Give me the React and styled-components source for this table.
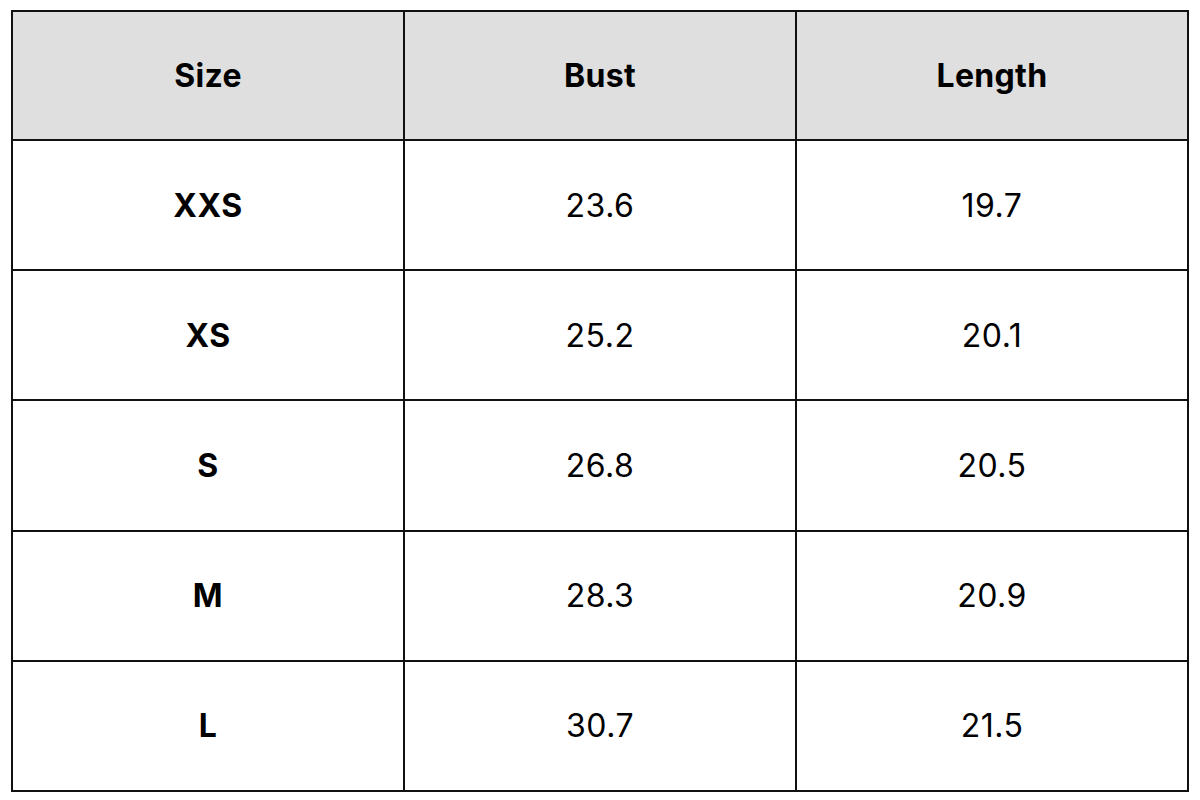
import styled, { createGlobalStyle } from 'styled-components'

const GlobalStyle = createGlobalStyle`
    html, body {
        margin: 0;
        padding: 0;
        background: #ffffff;
    }
    body {
        font-family: Inter, 'Open Sans', sans-serif;
        color: #000;
    }
`

const Page = styled.div`
    width: 1200px;
    height: 800px;
    padding: 10px 11px 0 11px;
    box-sizing: border-box;
`

const Table = styled.table`
    width: 1178px;
    height: 782px;
    border-collapse: collapse;
    table-layout: fixed;
    border: 2px solid #111;
`

const HeadCell = styled.th`
    background: #dfdfdf;
    border: 2px solid #111;
    font-size: 32px;
    font-weight: 700;
    letter-spacing: 0.3px;
    text-align: center;
    vertical-align: middle;
    height: 127px;
    padding: 0;
`

const Cell = styled.td`
    border: 2px solid #111;
    font-size: 32px;
    font-weight: ${(p) => (p.$bold ? 700 : 400)};
    letter-spacing: 0.5px;
    text-align: center;
    vertical-align: middle;
    padding: 0;
`

const rows = [
    ['XXS', '23.6', '19.7'],
    ['XS', '25.2', '20.1'],
    ['S', '26.8', '20.5'],
    ['M', '28.3', '20.9'],
    ['L', '30.7', '21.5'],
]

const App = () => {
    return (
        <Page>
            <GlobalStyle />
            <Table>
                <thead>
                    <tr>
                        <HeadCell>Size</HeadCell>
                        <HeadCell>Bust</HeadCell>
                        <HeadCell>Length</HeadCell>
                    </tr>
                </thead>
                <tbody>
                    {rows.map(([size, bust, length]) => (
                        <tr key={size}>
                            <Cell $bold>{size}</Cell>
                            <Cell>{bust}</Cell>
                            <Cell>{length}</Cell>
                        </tr>
                    ))}
                </tbody>
            </Table>
        </Page>
    )
}

export default App
